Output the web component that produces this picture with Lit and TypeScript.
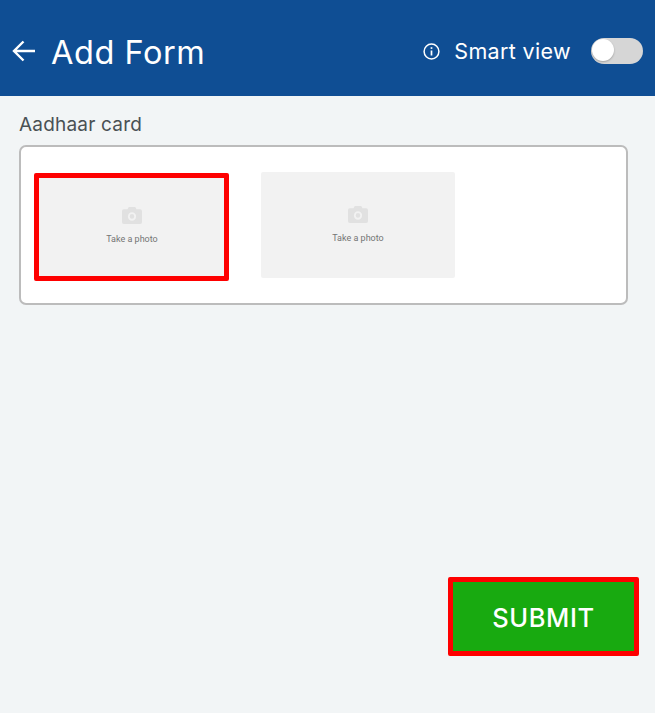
import { LitElement, html, css } from "lit";
import { customElement } from "lit/decorators.js";

const camera = html`<svg class="cam" width="20" height="17" viewBox="0 0 22 18" preserveAspectRatio="none"><path fill="#e1e1e1" fill-rule="evenodd" d="M7.5 0h7L16 2.5h4a2 2 0 0 1 2 2V16a2 2 0 0 1-2 2H2a2 2 0 0 1-2-2V4.500a2 2 0 0 1 2-2h4L7.500 0ZM11 5.500a4.500 4.500 0 1 0 0 9 4.500 4.500 0 0 0 0-9Zm0 2a2.500 2.500 0 1 1 0 5 2.500 2.500 0 0 1 0-5Z"/></svg>`;

@customElement("app-root")
export class AppRoot extends LitElement {
  static styles = css`
    :host {
      display: block;
      width: 655px;
      height: 713px;
      background: #f2f5f6;
      font-family: Inter, "Liberation Sans", sans-serif;
      overflow: hidden;
    }
    .page {
      display: flex;
      flex-direction: column;
      height: 713px;
    }
    header {
      height: 96px;
      flex: none;
      background: #0f4e94;
      color: #fff;
      display: flex;
      align-items: center;
      padding: 6px 12px 0 12px;
      box-sizing: border-box;
    }
    .back {
      display: block;
      margin-right: 15px;
      flex: none;
    }
    h1 {
      margin: 0;
      font-size: 32.5px;
      font-weight: 400;
      letter-spacing: 0.55px;
      line-height: 1;
      flex: 1;
      padding-top: 4px;
    }
    .info {
      display: block;
      margin-right: 14px;
    }
    .smart {
      font-size: 21.5px;
      letter-spacing: 0.35px;
      margin-right: 20px;
      line-height: 1;
      padding-top: 2px;
    }
    .toggle {
      width: 52px;
      height: 26px;
      border-radius: 13px;
      background: #d6d6d6;
      position: relative;
      flex: none;
    }
    .knob {
      position: absolute;
      left: 1px;
      top: 1px;
      width: 22px;
      height: 22px;
      border-radius: 50%;
      background: #fff;
      box-shadow: 0 1px 2px rgba(0, 0, 0, 0.25);
    }
    main {
      flex: 1;
      display: flex;
      flex-direction: column;
      padding: 0 16px 57px 19px;
    }
    .label {
      font-size: 19px;
      color: #4a5154;
      letter-spacing: 0.2px;
      line-height: 24px;
      padding: 17px 0 8px 0;
    }
    .card {
      height: 160px;
      width: 609px;
      box-sizing: border-box;
      border: 2px solid #bcbcbc;
      border-radius: 7px;
      background: #fff;
      display: flex;
      gap: 32px;
      padding: 25px 0 0 13px;
      align-items: flex-start;
    }
    .photo {
      width: 194px;
      height: 106px;
      box-sizing: border-box;
      background: #f2f2f2;
      border-radius: 2px;
      display: flex;
      flex-direction: column;
      align-items: center;
      justify-content: center;
      gap: 10px;
    }
    .photo.hl {
      width: 195px;
      height: 108px;
      margin-top: 1px;
      border: 5px solid #fe0000;
      padding: 0 0 3px 1px;
    }
    .photo span {
      font: 9px Roboto, sans-serif;
      color: #757575;
      line-height: 11px;
    }
    .cam {
      display: block;
    }
    .actions {
      margin-top: auto;
      display: flex;
      justify-content: flex-end;
    }
    button {
      width: 191px;
      height: 79px;
      box-sizing: border-box;
      border: 5px solid #fe0000;
      border-radius: 2px;
      background: #18aa10;
      color: #fff;
      font: 500 25.5px Inter, "Liberation Sans", sans-serif;
      letter-spacing: 0.6px;
      padding: 2px 0 0;
    }
  `;

  render() {
    return html`<div class="page">
      <header>
        <svg class="back" width="24" height="22" viewBox="0 0 24 22" fill="none" stroke="#fff" stroke-width="2.400"><path d="M23 11H2.500M11.500 1.500 2 11l9.500 9.500"/></svg>
        <h1>Add Form</h1>
        <svg class="info" width="17" height="17" viewBox="0 0 17 17" fill="none" stroke="#fff"><circle cx="8.500" cy="8.500" r="7.400" stroke-width="1.500"/><path d="M8.500 7.500v5" stroke-width="1.700"/><path d="M8.500 4.200v1.700" stroke-width="1.700"/></svg>
        <span class="smart">Smart view</span>
        <div class="toggle"><div class="knob"></div></div>
      </header>
      <main>
        <div class="label">Aadhaar card</div>
        <div class="card">
          <div class="photo hl">${camera}<span>Take a photo</span></div>
          <div class="photo">${camera}<span>Take a photo</span></div>
        </div>
        <div class="actions"><button>SUBMIT</button></div>
      </main>
    </div>`;
  }
}
